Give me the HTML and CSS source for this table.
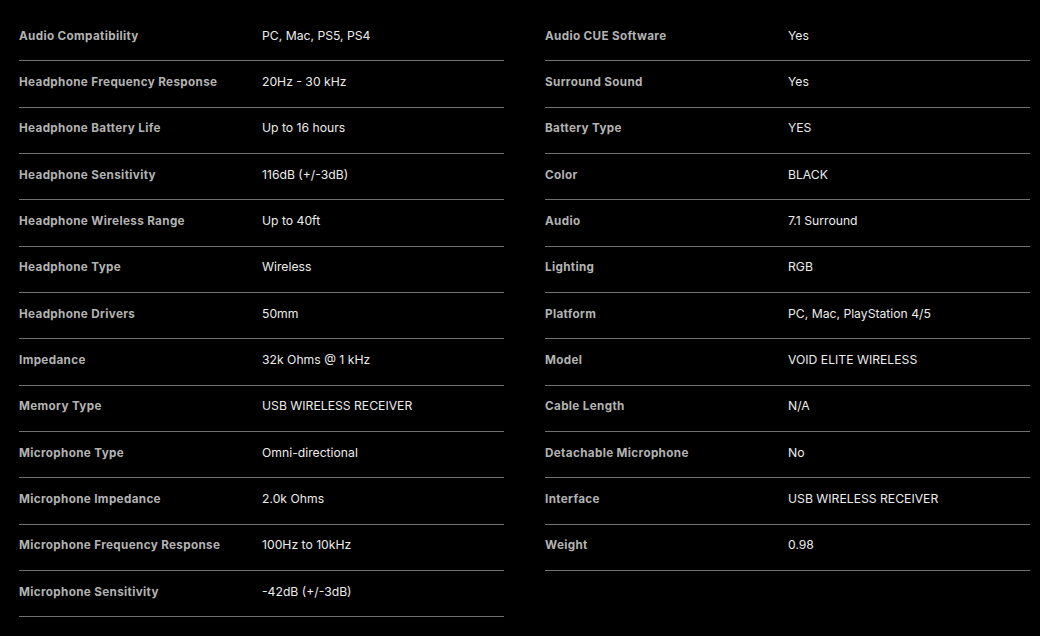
FILE: index.html
```html
<!DOCTYPE html>
<html>
<head>
<meta charset="utf-8">
<link rel="stylesheet" href="styles.css">
</head>
<body>
<div class="specs">
  <div class="col">
    <div class="row"><span class="label">Audio Compatibility</span><span class="value">PC, Mac, PS5, PS4</span></div>
    <div class="row"><span class="label">Headphone Frequency Response</span><span class="value">20Hz - 30 kHz</span></div>
    <div class="row"><span class="label">Headphone Battery Life</span><span class="value">Up to 16 hours</span></div>
    <div class="row"><span class="label">Headphone Sensitivity</span><span class="value">116dB (+/-3dB)</span></div>
    <div class="row"><span class="label">Headphone Wireless Range</span><span class="value">Up to 40ft</span></div>
    <div class="row"><span class="label">Headphone Type</span><span class="value">Wireless</span></div>
    <div class="row"><span class="label">Headphone Drivers</span><span class="value">50mm</span></div>
    <div class="row"><span class="label">Impedance</span><span class="value">32k Ohms @ 1 kHz</span></div>
    <div class="row"><span class="label">Memory Type</span><span class="value">USB WIRELESS RECEIVER</span></div>
    <div class="row"><span class="label">Microphone Type</span><span class="value">Omni-directional</span></div>
    <div class="row"><span class="label">Microphone Impedance</span><span class="value">2.0k Ohms</span></div>
    <div class="row"><span class="label">Microphone Frequency Response</span><span class="value">100Hz to 10kHz</span></div>
    <div class="row"><span class="label">Microphone Sensitivity</span><span class="value">-42dB (+/-3dB)</span></div>
  </div>
  <div class="col">
    <div class="row"><span class="label">Audio CUE Software</span><span class="value">Yes</span></div>
    <div class="row"><span class="label">Surround Sound</span><span class="value">Yes</span></div>
    <div class="row"><span class="label">Battery Type</span><span class="value">YES</span></div>
    <div class="row"><span class="label">Color</span><span class="value">BLACK</span></div>
    <div class="row"><span class="label">Audio</span><span class="value">7.1 Surround</span></div>
    <div class="row"><span class="label">Lighting</span><span class="value">RGB</span></div>
    <div class="row"><span class="label">Platform</span><span class="value">PC, Mac, PlayStation 4/5</span></div>
    <div class="row"><span class="label">Model</span><span class="value">VOID ELITE WIRELESS</span></div>
    <div class="row"><span class="label">Cable Length</span><span class="value">N/A</span></div>
    <div class="row"><span class="label">Detachable Microphone</span><span class="value">No</span></div>
    <div class="row"><span class="label">Interface</span><span class="value">USB WIRELESS RECEIVER</span></div>
    <div class="row"><span class="label">Weight</span><span class="value">0.98</span></div>
  </div>
</div>
</body>
</html>
```
FILE: styles.css
```css
html, body {
  margin: 0;
  padding: 0;
  background: #000;
}
body {
  width: 1040px;
  height: 636px;
  overflow: hidden;
}
.specs {
  display: grid;
  grid-template-columns: 485px 485px;
  column-gap: 41px;
  padding: 15px 10px 0 19px;
  align-items: start;
}
.col {
  display: flex;
  flex-direction: column;
}
.row {
  display: grid;
  grid-template-columns: 243px 1fr;
  align-items: center;
  height: 46.33px;
  box-sizing: border-box;
  padding-bottom: 4px;
  border-bottom: 1px solid #707070;
}
.label {
  font-family: "Inter", "Liberation Sans", sans-serif;
  font-weight: 700;
  font-size: 11.7px;
  line-height: 16px;
  letter-spacing: 0.35px;
  color: #b3b3b3;
}
.value {
  font-family: "Inter", "Liberation Sans", sans-serif;
  font-weight: 400;
  font-size: 12.2px;
  line-height: 16px;
  color: #ececec;
}
```
